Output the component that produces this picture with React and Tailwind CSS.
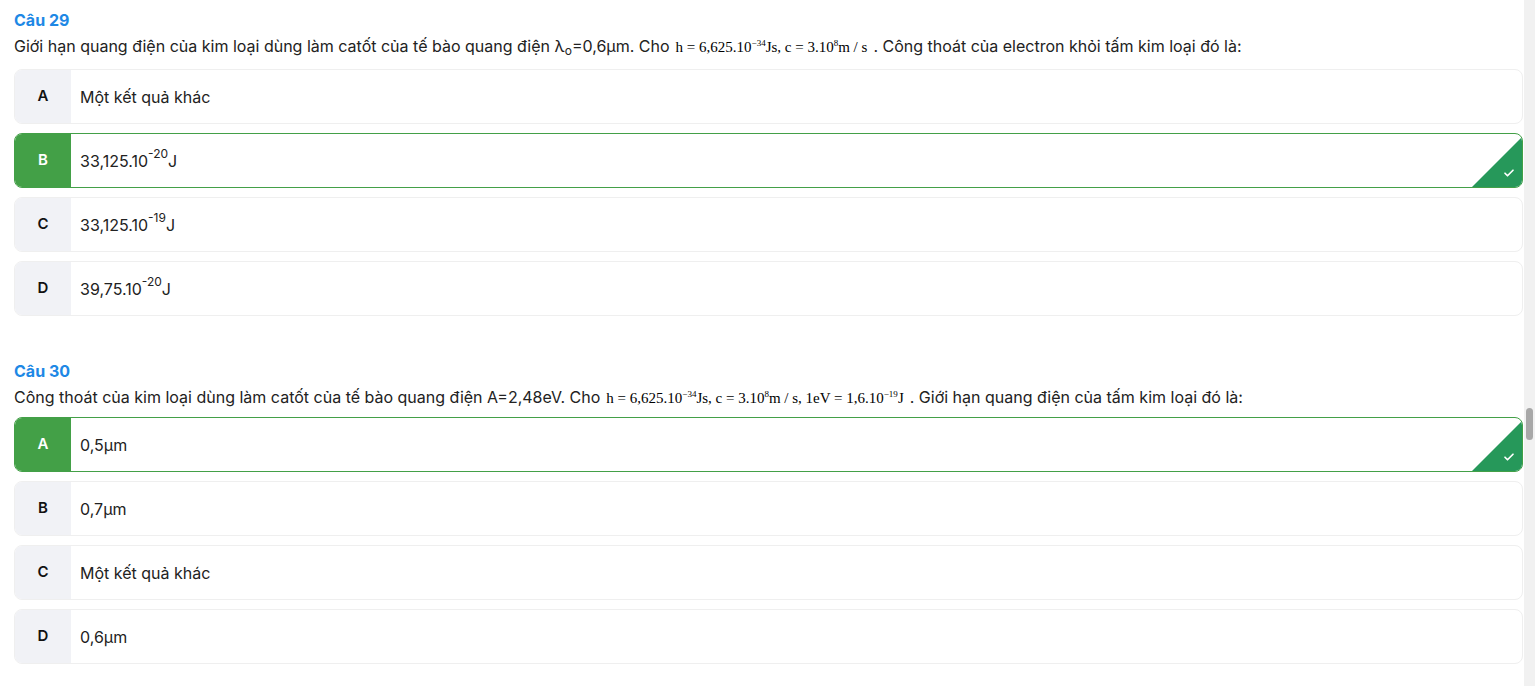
import React from "react";

const Sup = ({ children }) => (
  <sup className="text-[12px] relative -top-[7px]">{children}</sup>
);

const FSup = ({ children }) => (
  <sup className="text-[9px] relative -top-[6px]">{children}</sup>
);

const Formula = ({ children }) => (
  <span className="mx-[6px] font-['Liberation_Serif',serif] text-[15px] text-black">
    {children}
  </span>
);

const CheckCorner = () => (
  <div className="absolute right-0 bottom-0 w-[50px] h-[50px] bg-[#26985a] [clip-path:polygon(100%_0,100%_100%,0_100%)]">
    <svg
      viewBox="0 0 24 24"
      className="absolute right-[7px] bottom-[8px] w-[12px] h-[12px]"
      fill="none"
      stroke="white"
      strokeWidth="3.4"
      strokeLinecap="round"
      strokeLinejoin="round"
    >
      <path d="M4 12.5l5 5L20 6.5" />
    </svg>
  </div>
);

const Option = ({ letter, children, correct }) => (
  <div
    className={`relative flex h-[55px] rounded-lg border overflow-hidden ${
      correct ? "border-[#43a047]" : "border-[#efefef]"
    }`}
  >
    <div
      className={`w-[56px] shrink-0 flex items-center justify-center text-[15px] font-semibold ${
        correct ? "bg-[#43a047] text-white" : "bg-[#f1f2f6] text-[#111]"
      }`}
    >
      {letter}
    </div>
    <div className="flex items-center pl-[9px] text-[16px] text-[#222]">{children}</div>
    {correct && <CheckCorner />}
  </div>
);

const Question = ({ title, text, options, cardsMt }) => (
  <section>
    <h2 className="text-[16px] leading-[22px] font-bold text-[#1e88e5]">{title}</h2>
    <p className="mt-[4px] text-[16px] leading-[22px] text-[#222]">{text}</p>
    <div className={`flex flex-col gap-[9px] ${cardsMt}`}>
      {options.map((o) => (
        <Option key={o.letter} letter={o.letter} correct={o.correct}>
          {o.content}
        </Option>
      ))}
    </div>
  </section>
);

export default function App() {
  return (
    <div className="flex h-[686px] overflow-hidden bg-white font-['Inter',sans-serif]">
      <main className="flex-1 pl-[14px] pr-[1px] pt-[9px] flex flex-col gap-[44px]">
        <Question
          title="Câu 29"
          cardsMt="mt-[11px]"
          text={
            <>
              Giới hạn quang điện của kim loại dùng làm catốt của tế bào quang điện λ
              <sub className="text-[12px]">o</sub>=0,6μm. Cho
              <Formula>
                h = 6,625.10<FSup>−34</FSup>Js, c = 3.10<FSup>8</FSup>m / s
              </Formula>
              . Công thoát của electron khỏi tấm kim loại đó là:
            </>
          }
          options={[
            { letter: "A", content: "Một kết quả khác" },
            {
              letter: "B",
              correct: true,
              content: (
                <>
                  33,125.10<Sup>-20</Sup>J
                </>
              ),
            },
            {
              letter: "C",
              content: (
                <>
                  33,125.10<Sup>-19</Sup>J
                </>
              ),
            },
            {
              letter: "D",
              content: (
                <>
                  39,75.10<Sup>-20</Sup>J
                </>
              ),
            },
          ]}
        />
        <Question
          title="Câu 30"
          cardsMt="mt-[8px]"
          text={
            <>
              Công thoát của kim loại dùng làm catốt của tế bào quang điện A=2,48eV. Cho
              <Formula>
                h = 6,625.10<FSup>−34</FSup>Js, c = 3.10<FSup>8</FSup>m / s, 1eV = 1,6.10
                <FSup>−19</FSup>J
              </Formula>
              . Giới hạn quang điện của tấm kim loại đó là:
            </>
          }
          options={[
            { letter: "A", correct: true, content: "0,5μm" },
            { letter: "B", content: "0,7μm" },
            { letter: "C", content: "Một kết quả khác" },
            { letter: "D", content: "0,6μm" },
          ]}
        />
      </main>
      <div className="w-[11px] shrink-0 bg-[#f1f1f1] pt-[408px] flex justify-center">
        <div className="w-[7px] h-[32px] rounded-full bg-[#a8a8a8]" />
      </div>
    </div>
  );
}
